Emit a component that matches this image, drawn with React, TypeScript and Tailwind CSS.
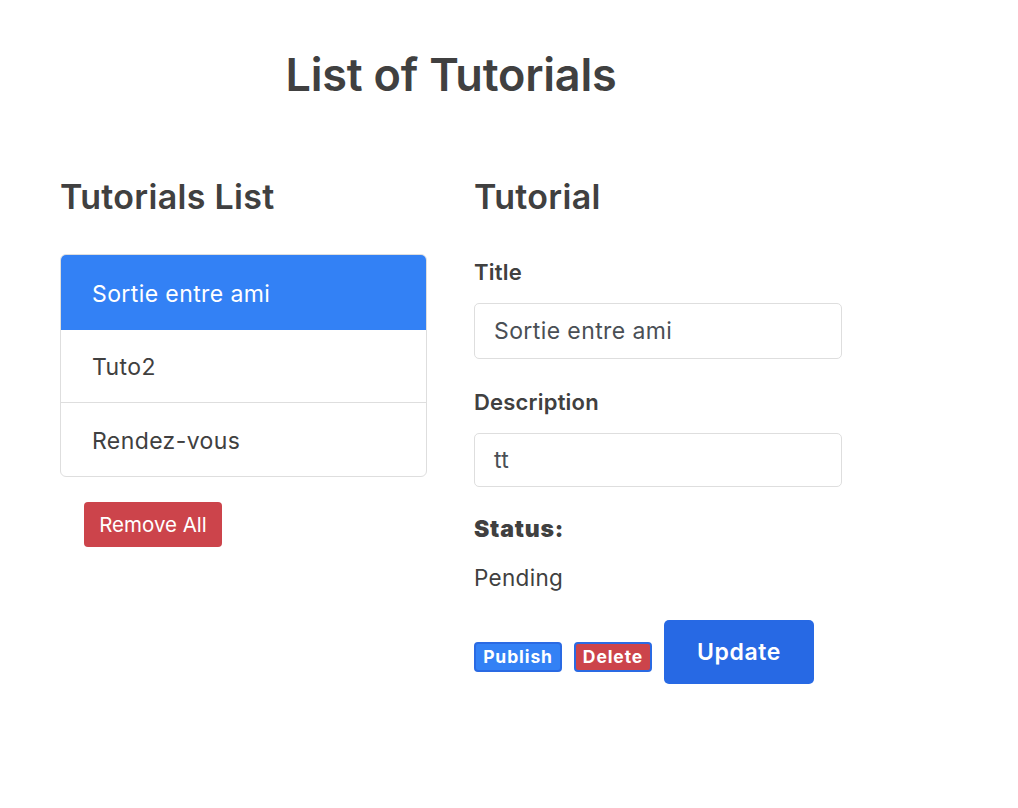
export default function App() {
  return (
    <div className="min-h-[808px] w-[1018px] bg-white font-['Inter',sans-serif] text-[#404040]">
      <div className="ml-[60px] w-[782px] pt-[48px]">
        <h1 className="text-center text-[45px] font-semibold leading-[54px] tracking-[-0.2px]">List of Tutorials</h1>
        <div className="mt-[75px] flex gap-[47px]">
          <div className="w-[367px]">
            <h4 className="text-[34px] font-semibold leading-[40px] tracking-[0.3px]">Tutorials List</h4>
            <ul className="mt-[37px] overflow-hidden rounded-[6px] border-[1.5px] border-[#dedede] text-[23px] leading-[34px] tracking-[0.4px]">
              <li className="flex h-[75px] items-center bg-[#3381f5] px-[31px] pt-[2px] text-white">Sortie entre ami</li>
              <li className="flex h-[73px] items-center border-b-[1.5px] border-[#dedede] px-[31px] pt-[2px]">Tuto2</li>
              <li className="flex h-[73px] items-center px-[31px] pt-[2px]">Rendez-vous</li>
            </ul>
            <button className="ml-[24px] mt-[25px] h-[45px] w-[138px] rounded-[4px] bg-[#cc444b] text-[20.5px] leading-[30px] text-white">
              Remove All
            </button>
          </div>
          <div className="w-[368px]">
            <h4 className="text-[34px] font-semibold leading-[40px] tracking-[0.3px]">Tutorial</h4>
            <div className="mt-[42px] text-[22px] font-semibold leading-[26px] tracking-[0.2px]">Title</div>
            <div className="mt-[18px] flex h-[56px] items-center rounded-[5px] border-[1.5px] border-[#dedede] px-[19px] text-[23px] tracking-[0.4px] text-[#4a4f55]">
              Sortie entre ami
            </div>
            <div className="mt-[30px] text-[22px] font-semibold leading-[26px] tracking-[0.2px]">Description</div>
            <div className="mt-[18px] flex h-[54px] items-center rounded-[5px] border-[1.5px] border-[#dedede] px-[19px] text-[23px] tracking-[0.4px] text-[#4a4f55]">
              tt
            </div>
            <div className="mt-[28px] text-[23px] font-black leading-[28px] tracking-[0.8px]">Status:</div>
            <div className="mt-[21px] text-[22.5px] leading-[28px] tracking-[0.3px]">Pending</div>
            <div className="mt-[28px] flex items-end gap-[12px]">
              <span className="mb-[12px] flex h-[30px] w-[88px] items-center justify-center rounded-[4px] border-2 border-[#2a6ae3] bg-[#3381f5] text-[17.5px] font-bold tracking-[0.9px] text-white">
                Publish
              </span>
              <span className="mb-[12px] flex h-[30px] w-[78px] items-center justify-center rounded-[4px] border-2 border-[#2a6ae3] bg-[#cc444b] text-[17.5px] font-bold tracking-[0.9px] text-white">
                Delete
              </span>
              <button className="h-[64px] w-[150px] rounded-[5px] bg-[#2769e4] text-[23px] font-semibold tracking-[0.6px] text-white">
                Update
              </button>
            </div>
          </div>
        </div>
      </div>
    </div>
  );
}
